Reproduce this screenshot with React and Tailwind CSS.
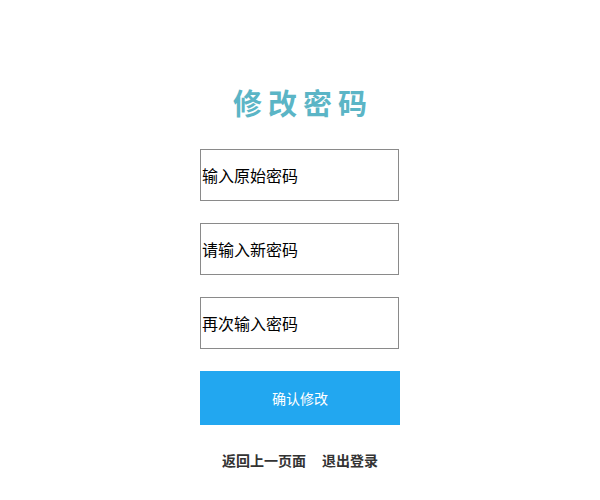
import React from 'react';

const fields = ['输入原始密码', '请输入新密码', '再次输入密码'];

const App = () => {
  return (
    <div className="w-[600px] h-[500px] bg-white font-['Microsoft_YaHei','Noto_Sans_CJK_SC',sans-serif]">
      <div className="w-[200px] mx-auto pt-[82px]">
        <h1 className="text-center text-[29px] leading-[40px] font-bold text-[#5bb5c6] tracking-[6px] pl-[6px]">
          修改密码
        </h1>
        <div className="mt-[27px] flex flex-col gap-[22px]">
          {fields.map((label) => (
            <input
              key={label}
              type="password"
              placeholder={label}
              className="w-[199px] h-[52px] border border-[#8a8a8a] px-[1px] text-[16px] text-black placeholder:text-black outline-none bg-white"
            />
          ))}
        </div>
        <button className="mt-[22px] w-[200px] h-[54px] bg-[#22a7f0] text-white text-[14px]">
          确认修改
        </button>
        <div className="mt-[25px] flex justify-center gap-[16px] text-[14px] font-bold text-[#333]">
          <a href="#">返回上一页面</a>
          <a href="#">退出登录</a>
        </div>
      </div>
    </div>
  );
};

export default App;
